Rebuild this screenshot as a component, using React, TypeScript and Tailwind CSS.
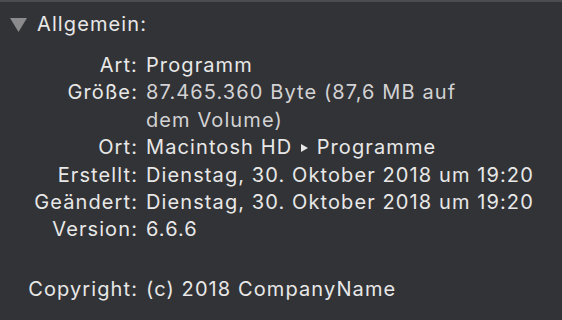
import React from "react";

const rows: { label: string; value: React.ReactNode; dim?: boolean }[] = [
  { label: "Art:", value: "Programm" },
  { label: "Größe:", value: "87.465.360 Byte (87,6 MB auf dem Volume)", dim: true },
  {
    label: "Ort:",
    value: (
      <>
        Macintosh HD{" "}
        <svg width="7" height="8" viewBox="0 0 7 8" className="inline-block align-[2px] mx-[2px]">
          <polygon points="0,0 7,4 0,8" fill="#e8e8e8" />
        </svg>{" "}
        Programme
      </>
    ),
  },
  { label: "Erstellt:", value: "Dienstag, 30. Oktober 2018 um 19:20" },
  { label: "Geändert:", value: "Dienstag, 30. Oktober 2018 um 19:20" },
  { label: "Version:", value: "6.6.6" },
];

const App = () => {
  return (
    <div
      className="w-[562px] h-[320px] bg-[#323336] border-t-2 border-[#4b4c4f] text-[#e8e8e8] overflow-hidden tracking-[1.1px]"
      style={{ fontFamily: "Inter, 'Liberation Sans', sans-serif" }}
    >
      <div className="flex items-center pl-[10px] pt-[11px] h-[32px]">
        <svg width="17" height="14" viewBox="0 0 17 14" className="mt-[2px]">
          <polygon points="0,0 17,0 8.5,14" fill="#8b8b8d" />
        </svg>
        <span className="ml-[10px] text-[20px]">Allgemein:</span>
      </div>
      <div className="grid grid-cols-[138px_1fr] gap-x-[8px] mt-[18px] text-[20px] leading-[27.4px] pr-4">
        {rows.map((r) => (
          <React.Fragment key={r.label}>
            <div className="text-right">{r.label}</div>
            <div className={r.dim ? "text-[#d2d2d4] w-[330px]" : ""}>{r.value}</div>
          </React.Fragment>
        ))}
        <div className="h-[32px] col-span-2" />
        <div className="text-right">Copyright:</div>
        <div>(c) 2018 CompanyName</div>
      </div>
    </div>
  );
};

export default App;
